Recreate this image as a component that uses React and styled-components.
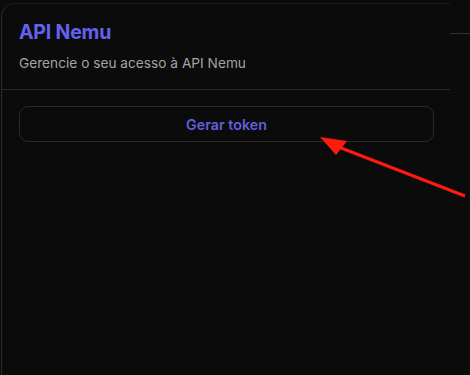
import React from "react";
import styled, { createGlobalStyle } from "styled-components";

const GlobalStyle = createGlobalStyle`
  html, body {
    margin: 0;
    padding: 0;
    background: #0b0b0b;
  }
  body {
    font-family: Inter, "Noto Sans", sans-serif;
  }
`;

const Page = styled.div`
  position: relative;
  width: 470px;
  height: 375px;
  overflow: hidden;
  background: #0b0b0b;
  display: flex;
  padding-top: 3px;
  padding-left: 1px;
  box-sizing: border-box;
`;

const Card = styled.div`
  width: 448px;
  height: 400px;
  flex-shrink: 0;
  border-left: 1.5px solid #2b2b2b;
  border-top: 1px solid #1c1c1c;
  border-top-left-radius: 14px;
  background: #0b0b0b;
  display: flex;
  flex-direction: column;
`;

const Header = styled.div`
  padding: 14px 17px 0;
  height: 86px;
  box-sizing: border-box;
  border-bottom: 1px solid #2a2a2a;
`;

const Title = styled.h2`
  margin: 0;
  font-size: 19.5px;
  font-weight: 700;
  line-height: 28px;
  color: #6262ef;
  letter-spacing: -0.2px;
`;

const Subtitle = styled.p`
  margin: 7px 0 0;
  font-size: 13.7px;
  line-height: 20px;
  color: #a3a3a3;
`;

const Body = styled.div`
  padding: 16px 16px 0 17px;
`;

const TokenButton = styled.button`
  width: 415px;
  height: 36px;
  border: 1px solid #2a2a2a;
  border-radius: 9px;
  background: transparent;
  color: #5f5fdf;
  font-family: Inter, "Noto Sans", sans-serif;
  font-size: 14.3px;
  font-weight: 600;
  cursor: pointer;
`;

const SideStrip = styled.div`
  flex: 1;
  margin-top: 30px;
  height: 1px;
  background: #2e2e2e;
`;

const Arrow = styled.svg`
  position: absolute;
  left: 0;
  top: 0;
  pointer-events: none;
`;

export default function App() {
  return (
    <>
      <GlobalStyle />
      <Page>
        <Card>
          <Header>
            <Title>API Nemu</Title>
            <Subtitle>Gerencie o seu acesso à API Nemu</Subtitle>
          </Header>
          <Body>
            <TokenButton>Gerar token</TokenButton>
          </Body>
        </Card>
        <SideStrip />
        <Arrow width="470" height="375" viewBox="0 0 470 375">
          <line x1="465" y1="196" x2="336" y2="146" stroke="#ff1a0f" strokeWidth="3" />
          <polygon points="320,137 347,141 336,155" fill="#ff1a0f" />
        </Arrow>
      </Page>
    </>
  );
}
